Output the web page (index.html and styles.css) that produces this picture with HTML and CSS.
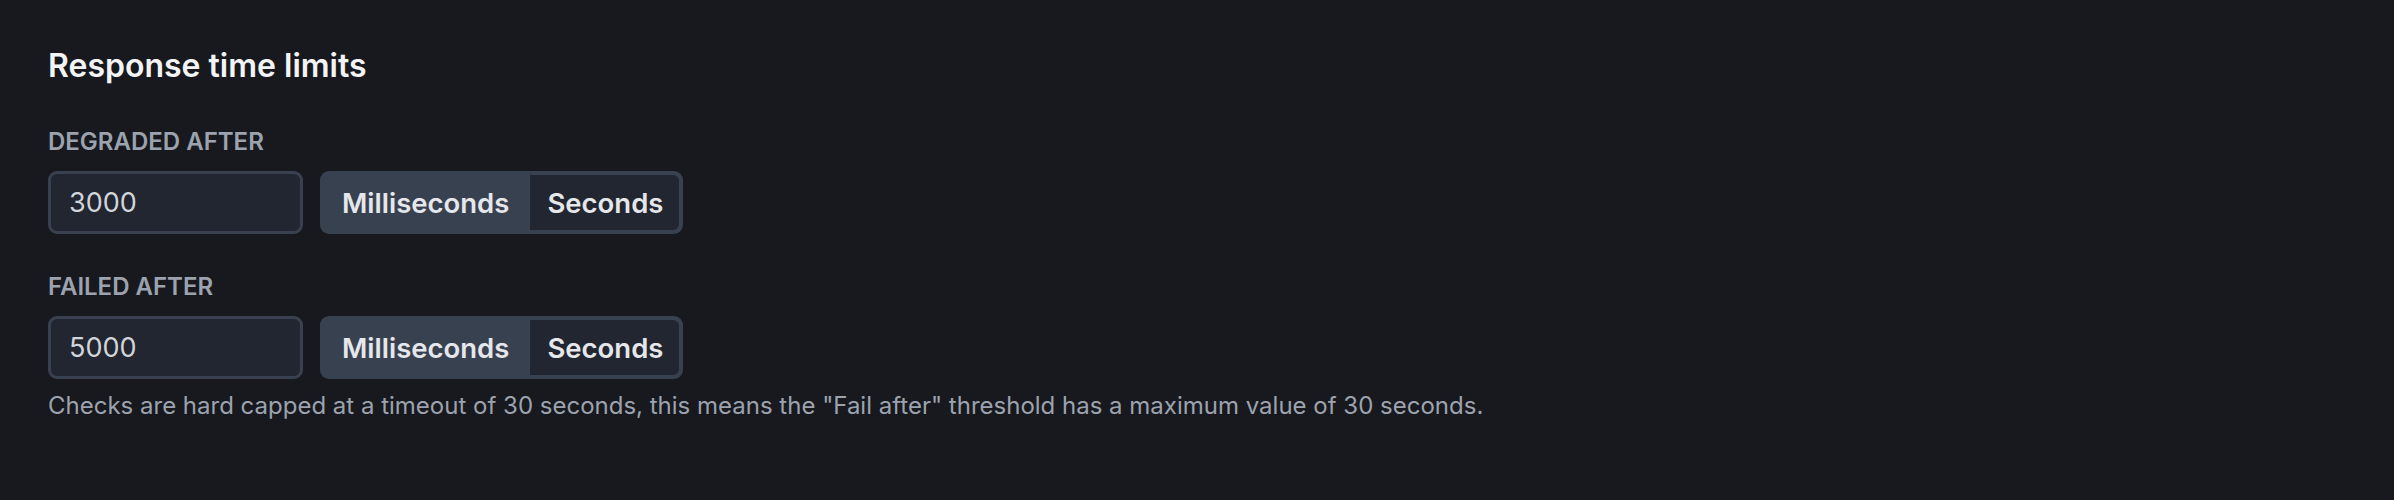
FILE: index.html
```html
<!DOCTYPE html>
<html lang="en">
<head>
<meta charset="utf-8">
<title>Response time limits</title>
<link rel="stylesheet" href="styles.css">
</head>
<body>
<section class="panel">
  <h2 class="title">Response time limits</h2>
  <div class="field field-first">
    <label class="label" for="degraded">Degraded after</label>
    <div class="row">
      <input class="input" id="degraded" type="text" value="3000">
      <div class="segmented">
        <button class="seg seg-active" type="button">Milliseconds</button>
        <button class="seg seg-idle" type="button">Seconds</button>
      </div>
    </div>
  </div>
  <div class="field">
    <label class="label" for="failed">Failed after</label>
    <div class="row">
      <input class="input" id="failed" type="text" value="5000">
      <div class="segmented">
        <button class="seg seg-active" type="button">Milliseconds</button>
        <button class="seg seg-idle" type="button">Seconds</button>
      </div>
    </div>
  </div>
  <p class="help">Checks are hard capped at a timeout of 30 seconds, this means the "Fail after" threshold has a maximum value of 30 seconds.</p>
</section>
</body>
</html>
```

FILE: styles.css
```css
html, body {
  margin: 0;
  padding: 0;
  background: #18191e;
}
body {
  font-family: Inter, "Noto Sans", sans-serif;
  color: #e5e7eb;
}
.panel {
  padding: 48px;
}
.title {
  margin: 0;
  font-size: 32px;
  line-height: 36px;
  font-weight: 600;
  color: #f3f4f6;
}
.field {
  display: flex;
  flex-direction: column;
  gap: 14px;
  margin-top: 38px;
}
.field-first {
  margin-top: 43px;
}
.label {
  font-size: 24px;
  line-height: 30px;
  font-weight: 600;
  text-transform: uppercase;
  color: #9ca3af;
}
.row {
  display: flex;
  align-items: stretch;
  gap: 17px;
}
.input {
  box-sizing: border-box;
  width: 255px;
  height: 63px;
  margin: 0;
  padding: 0 18px;
  border: 3px solid #394150;
  border-radius: 9px;
  background: #222630;
  color: #d1d5db;
  font-family: Inter, "Noto Sans", sans-serif;
  font-size: 27px;
  outline: none;
}
.segmented {
  display: flex;
  box-sizing: border-box;
  height: 63px;
  padding: 4px;
  border-radius: 9px;
  background: #384150;
}
.seg {
  margin: 0;
  border: 0;
  font-family: Inter, "Noto Sans", sans-serif;
  font-size: 27.5px;
  font-weight: 600;
  color: #e5e7eb;
  cursor: pointer;
}
.seg-active {
  padding: 0 21px 0 18px;
  background: #384150;
  border-radius: 6px 0 0 6px;
}
.seg-idle {
  padding: 0 16px 0 17px;
  background: #222630;
  border-radius: 0 6px 6px 0;
}
.help {
  margin: 9px 0 0;
  font-size: 24px;
  line-height: 36px;
  color: #9ca3af;
}
```
